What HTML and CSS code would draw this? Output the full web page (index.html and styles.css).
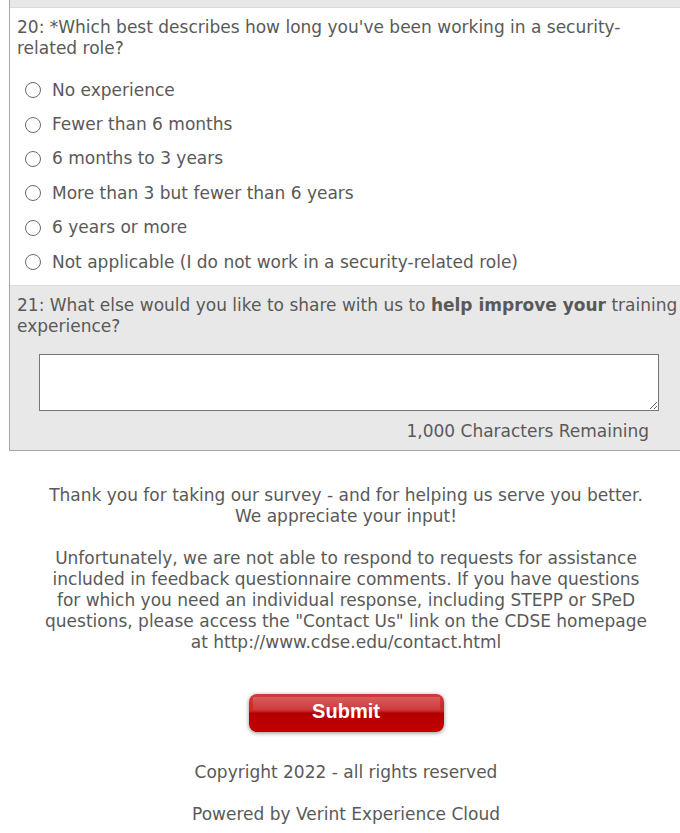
FILE: index.html
```html
<!DOCTYPE html>
<html lang="en">
<head>
    <meta charset="UTF-8">
    <meta name="viewport" content="width=device-width, initial-scale=1.0">
    <title>CDSE Feedback Survey</title>
    <link rel="stylesheet" href="styles.css">
</head>
<body>
    <div class="page">
        <div class="survey">
            <div class="question shaded tail"></div>

            <div class="question">
                <div class="question-text">20: *Which best describes how long you've been working in a security-<br>related role?</div>
                <div class="options">
                    <label class="option"><input type="radio" name="q20" value="1"> No experience</label>
                    <label class="option"><input type="radio" name="q20" value="2"> Fewer than 6 months</label>
                    <label class="option"><input type="radio" name="q20" value="3"> 6 months to 3 years</label>
                    <label class="option"><input type="radio" name="q20" value="4"> More than 3 but fewer than 6 years</label>
                    <label class="option"><input type="radio" name="q20" value="5"> 6 years or more</label>
                    <label class="option"><input type="radio" name="q20" value="6"> Not applicable (I do not work in a security-related role)</label>
                </div>
            </div>

            <div class="question shaded">
                <div class="question-text">21: What else would you like to share with us to <b>help improve your</b> training<br>experience?</div>
                <textarea id="comments" maxlength="1000"></textarea>
                <div class="counter"><span id="remaining">1,000</span> Characters Remaining</div>
            </div>
        </div>

        <div class="closing">
            Thank you for taking our survey - and for helping us serve you better.<br>
            We appreciate your input!<br><br>
            Unfortunately, we are not able to respond to requests for assistance included in feedback questionnaire comments. If you have questions for which you need an individual response, including STEPP or SPeD questions, please access the "Contact Us" link on the CDSE homepage at http://www.cdse.edu/contact.html
        </div>

        <div class="actions">
            <button class="submit" type="submit">Submit</button>
        </div>

        <div class="footer">
            Copyright 2022 - all rights reserved<br><br>
            Powered by Verint Experience Cloud
        </div>
    </div>

    <script>
        const comments = document.getElementById("comments");
        const remaining = document.getElementById("remaining");

        comments.addEventListener("input", function () {
            const left = 1000 - comments.value.length;
            remaining.textContent = left.toLocaleString("en-US");
        });
    </script>
</body>
</html>
```

FILE: styles.css
```css
body {
    margin: 0;
    overflow-x: hidden;
    font-family: "DejaVu Sans", Verdana, sans-serif;
    font-size: 17px;
    line-height: 21px;
    color: #595959;
}
.page {
    width: 674px;
    margin-left: 9px;
}
.survey {
    width: 700px;
    border-left: 1px solid #a6a6a6;
    border-bottom: 1px solid #a6a6a6;
}
.question {
    padding: 9px 7px 6px 7px;
    border-bottom: 1px solid #dcdcdc;
}
.question.shaded {
    background: #e8e8e8;
}
.question.tail {
    height: 7px;
    padding: 0;
}
.question:last-child {
    border-bottom: none;
    padding-bottom: 8px;
}
.question-text {
    width: 670px;
}
.options {
    margin-top: 14px;
}
.option {
    display: flex;
    align-items: center;
    height: 34.4px;
}
.option input {
    appearance: none;
    flex: none;
    box-sizing: border-box;
    width: 16px;
    height: 16px;
    margin: 0 11px 0 8px;
    border: 1.5px solid #6b6b6b;
    border-radius: 50%;
    background: #fff;
}
.option input:checked {
    background: radial-gradient(#555 0 3.5px, #fff 4px);
}
textarea {
    display: block;
    box-sizing: border-box;
    width: 620px;
    height: 57px;
    margin: 17px 0 0 22px;
    border: 1px solid #767676;
    font-family: inherit;
    font-size: 14px;
    resize: vertical;
}
.counter {
    width: 632px;
    margin-top: 10px;
    text-align: right;
}
.closing {
    margin-top: 34px;
    padding: 0 30px;
    text-align: center;
}
.actions {
    margin-top: 41px;
    text-align: center;
}
.submit {
    width: 195px;
    height: 38px;
    padding: 0 0 3px;
    border: none;
    border-radius: 8px;
    background:
        linear-gradient(rgba(255, 255, 255, 0.18), rgba(255, 255, 255, 0.08)) no-repeat 4px 3px / 187px 13px,
        linear-gradient(#d23c3c 0%, #c82828 45%, #b30000 50%, #c40000 100%);
    box-shadow: 0 1px 4px rgba(0, 0, 0, 0.45), inset 0 0 1px rgba(0, 0, 0, 0.3);
    color: #fff;
    font-family: "Liberation Sans", Arial, sans-serif;
    font-size: 20px;
    font-weight: bold;
    cursor: pointer;
}
.footer {
    margin-top: 30px;
    text-align: center;
}
```
